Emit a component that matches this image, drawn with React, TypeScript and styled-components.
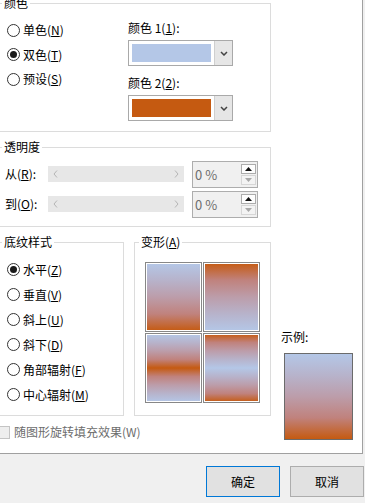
import React from 'react';
import styled, { createGlobalStyle } from 'styled-components';

const BLUE = '#b4c7e7';
const ORANGE = '#c55a11';
// in-between colours, mixed in linear light the way Office blends them
const MID1 = '#b7b3cb';
const MID2 = '#bc9daa';
const MID3 = '#c0827d';

type Shade = 'down' | 'up' | 'center' | 'edge';

const gradients: Record<Shade, string> = {
  down: `linear-gradient(to bottom, ${BLUE} 0%, ${MID1} 25%, ${MID2} 50%, ${MID3} 75%, ${ORANGE} 100%)`,
  up: `linear-gradient(to bottom, ${ORANGE} 0%, ${MID3} 25%, ${MID2} 50%, ${MID1} 75%, ${BLUE} 100%)`,
  center: `linear-gradient(to bottom, ${BLUE} 0%, ${MID1} 12.5%, ${MID2} 25%, ${MID3} 37.5%, ${ORANGE} 50%, ${MID3} 62.5%, ${MID2} 75%, ${MID1} 87.5%, ${BLUE} 100%)`,
  edge: `linear-gradient(to bottom, ${ORANGE} 0%, ${MID3} 12.5%, ${MID2} 25%, ${MID1} 37.5%, ${BLUE} 50%, ${MID1} 62.5%, ${MID2} 75%, ${MID3} 87.5%, ${ORANGE} 100%)`,
};

const GlobalStyle = createGlobalStyle`
  html, body {
    margin: 0;
    padding: 0;
    background: #f0f0f0;
  }
  body {
    font-family: 'Noto Sans CJK SC', 'Noto Sans', sans-serif;
    font-size: 12px;
    line-height: 16px;
    color: #000;
  }
`;

const Page = styled.div`
  width: 365px;
  height: 503px;
  overflow: hidden;
  display: flex;
  flex-direction: column;
  background: #f0f0f0;
`;

const Panel = styled.div`
  box-sizing: border-box;
  width: 363px;
  height: 454px;
  flex-shrink: 0;
  padding-top: 3px;
  background: #fff;
  border-right: 1px solid #a0a0a0;
  border-bottom: 1px solid #a0a0a0;
  overflow: hidden;
  display: flex;
  flex-direction: column;
`;

const Group = styled.div<{ $w: number; $h: number }>`
  position: relative;
  box-sizing: border-box;
  width: ${(p) => p.$w}px;
  height: ${(p) => p.$h}px;
  flex-shrink: 0;
  border: 1px solid #dcdcdc;
`;

const Legend = styled.span`
  position: absolute;
  top: -9px;
  left: 4px;
  padding: 0 2px;
  background: #fff;
  white-space: nowrap;
`;

const ColorGroup = styled(Group)`
  margin-left: -3px;
  display: flex;
`;

const RadioList = styled.div<{ $w?: number; $top: number }>`
  display: flex;
  flex-direction: column;
  width: ${(p) => (p.$w ? `${p.$w}px` : 'auto')};
  padding: ${(p) => p.$top}px 0 0 9px;
`;

const RadioRow = styled.div<{ $h: number }>`
  height: ${(p) => p.$h}px;
  display: flex;
  align-items: center;
  gap: 3px;
  white-space: nowrap;
`;

const RadioCircle = styled.span<{ $on: boolean }>`
  box-sizing: border-box;
  width: 13px;
  height: 13px;
  flex-shrink: 0;
  border-radius: 50%;
  border: 1px solid #333;
  background: #fff;
  display: flex;
  align-items: center;
  justify-content: center;

  &::after {
    content: '';
    display: ${(p) => (p.$on ? 'block' : 'none')};
    width: 7px;
    height: 7px;
    border-radius: 50%;
    background: #1a1a1a;
  }
`;

const Key = styled.span`
  text-decoration: underline;
`;

const ColorColumn = styled.div`
  display: flex;
  flex-direction: column;
  padding-top: 16px;
`;

const FieldLabel = styled.div<{ $gap?: number }>`
  margin-top: ${(p) => p.$gap ?? 0}px;
  white-space: nowrap;
`;

const Dropdown = styled.div`
  box-sizing: border-box;
  display: flex;
  width: 105px;
  height: 26px;
  margin-top: 4px;
  border: 1px solid #a9a9a9;
  background: #fff;
`;

const Swatch = styled.div<{ $color: string }>`
  width: 80px;
  margin: 3px;
  background: ${(p) => p.$color};
`;

const DropButton = styled.div`
  margin-left: auto;
  width: 17px;
  border-left: 1px solid #cfcfcf;
  background: #e6e6e6;
  display: flex;
  align-items: center;
  justify-content: center;
`;

const TransGroup = styled(Group)`
  margin: 15px 0 0 -3px;
  padding: 13px 0 0 7px;
  display: flex;
  flex-direction: column;
  gap: 4px;
`;

const TransRow = styled.div`
  height: 26px;
  display: flex;
  align-items: center;
`;

const TransLabel = styled.span`
  width: 43px;
  white-space: nowrap;
`;

const Slider = styled.div`
  box-sizing: border-box;
  width: 136px;
  height: 16px;
  margin-right: 8px;
  padding: 0 5px;
  background: #e7e7e7;
  display: flex;
  align-items: center;
  justify-content: space-between;
`;

const Spinner = styled.div`
  box-sizing: border-box;
  display: flex;
  width: 66px;
  height: 27px;
  border: 1px solid #adadad;
  background: #f0f0f0;
`;

const SpinText = styled.span`
  flex: 1;
  padding-left: 2px;
  font-size: 13px;
  line-height: 25px;
  color: #6d6d6d;
`;

const SpinButtons = styled.div`
  display: flex;
  flex-direction: column;
  gap: 1px;
  width: 15px;
  padding: 2px 1px 2px 0;
`;

const SpinButton = styled.div<{ $disabled?: boolean }>`
  flex: 1;
  box-sizing: border-box;
  border: 1px solid ${(p) => (p.$disabled ? '#d6d6d6' : '#acacac')};
  background: ${(p) => (p.$disabled ? '#f3f3f3' : '#fdfdfd')};
  display: flex;
  align-items: center;
  justify-content: center;
`;

const BottomRow = styled.div`
  display: flex;
  margin-top: 15px;
`;

const LeftColumn = styled.div`
  display: flex;
  flex-direction: column;
  margin-left: -3px;
`;

const GroupsRow = styled.div`
  display: flex;
  gap: 10px;
`;

const TileGrid = styled.div`
  display: grid;
  grid-template-columns: 57px 57px;
  grid-auto-rows: 70px;
  gap: 1px;
  padding: 19px 0 0 10px;
`;

const Tile = styled.div<{ $shade: Shade }>`
  box-sizing: border-box;
  border: 1px solid #878787;
  background: ${(p) => gradients[p.$shade]};
  box-shadow: inset 0 0 0 1px #fff;
`;

const CheckRow = styled.div`
  height: 16px;
  margin-top: 8px;
  display: flex;
  align-items: center;
  gap: 4px;
  color: #6d6d6d;
  white-space: nowrap;
`;

const CheckBox = styled.span`
  box-sizing: border-box;
  width: 13px;
  height: 13px;
  border: 1px solid #c4c4c4;
  background: #eeeeee;
`;

const SampleColumn = styled.div`
  display: flex;
  flex-direction: column;
  margin-left: 10px;
  padding-top: 87px;
`;

const SampleBox = styled.div`
  box-sizing: border-box;
  width: 69px;
  height: 87px;
  margin: 8px 0 0 3px;
  border: 1px solid #6b6b6b;
  background: ${gradients.down};
`;

const Footer = styled.div`
  flex: 1;
  display: flex;
  justify-content: flex-end;
  align-items: flex-start;
  gap: 10px;
  padding: 12px 1px 0 0;
`;

const Button = styled.button<{ $default?: boolean }>`
  box-sizing: border-box;
  width: 74px;
  height: 31px;
  padding: 0;
  border: 1px solid ${(p) => (p.$default ? '#0078d7' : '#adadad')};
  background: #e1e1e1;
  font: inherit;
  color: #000;
`;

const Chevron = () => (
  <svg width="8" height="5" viewBox="0 0 8 5">
    <polyline points="1,1 4,4 7,1" fill="none" stroke="#444" strokeWidth="1.5" />
  </svg>
);

const Arrow = ({ dir }: { dir: 'left' | 'right' }) => (
  <svg width="5" height="8" viewBox="0 0 5 8">
    <polyline
      points={dir === 'left' ? '4,0.5 1,4 4,7.5' : '1,0.5 4,4 1,7.5'}
      fill="none"
      stroke="#b4b4b4"
      strokeWidth="1"
    />
  </svg>
);

const Triangle = ({ up, color }: { up?: boolean; color: string }) => (
  <svg width="7" height="4" viewBox="0 0 7 4">
    <polygon points={up ? '0,4 3.5,0 7,4' : '0,0 3.5,4 7,0'} fill={color} />
  </svg>
);

const Radio = ({ on, h, children }: { on?: boolean; h: number; children: React.ReactNode }) => (
  <RadioRow $h={h}>
    <RadioCircle $on={!!on} />
    <span>{children}</span>
  </RadioRow>
);

const TransparencyRow = ({ label }: { label: React.ReactNode }) => (
  <TransRow>
    <TransLabel>{label}</TransLabel>
    <Slider>
      <Arrow dir="left" />
      <Arrow dir="right" />
    </Slider>
    <Spinner>
      <SpinText>0 %</SpinText>
      <SpinButtons>
        <SpinButton>
          <Triangle up color="#111" />
        </SpinButton>
        <SpinButton $disabled>
          <Triangle color="#a8a8a8" />
        </SpinButton>
      </SpinButtons>
    </Spinner>
  </TransRow>
);

const ColorPick = ({ color }: { color: string }) => (
  <Dropdown>
    <Swatch $color={color} />
    <DropButton>
      <Chevron />
    </DropButton>
  </Dropdown>
);

export default function App() {
  return (
    <>
      <GlobalStyle />
      <Page>
        <Panel>
          <ColorGroup $w={274} $h={129}>
            <Legend>颜色</Legend>
            <RadioList $w={121} $top={14}>
              <Radio h={24.5}>
                单色(<Key>N</Key>)
              </Radio>
              <Radio h={24.5} on>
                双色(<Key>T</Key>)
              </Radio>
              <Radio h={24.5}>
                预设(<Key>S</Key>)
              </Radio>
            </RadioList>
            <ColorColumn>
              <FieldLabel>
                颜色 1(<Key>1</Key>):
              </FieldLabel>
              <ColorPick color={BLUE} />
              <FieldLabel $gap={9}>
                颜色 2(<Key>2</Key>):
              </FieldLabel>
              <ColorPick color={ORANGE} />
            </ColorColumn>
          </ColorGroup>

          <TransGroup $w={274} $h={80}>
            <Legend>透明度</Legend>
            <TransparencyRow
              label={
                <>
                  从(<Key>R</Key>):
                </>
              }
            />
            <TransparencyRow
              label={
                <>
                  到(<Key>O</Key>):
                </>
              }
            />
          </TransGroup>

          <BottomRow>
            <LeftColumn>
              <GroupsRow>
                <Group $w={127} $h={174}>
                  <Legend>底纹样式</Legend>
                  <RadioList $top={14}>
                    <Radio h={25} on>
                      水平(<Key>Z</Key>)
                    </Radio>
                    <Radio h={25}>
                      垂直(<Key>V</Key>)
                    </Radio>
                    <Radio h={25}>
                      斜上(<Key>U</Key>)
                    </Radio>
                    <Radio h={25}>
                      斜下(<Key>D</Key>)
                    </Radio>
                    <Radio h={25}>
                      角部辐射(<Key>F</Key>)
                    </Radio>
                    <Radio h={25}>
                      中心辐射(<Key>M</Key>)
                    </Radio>
                  </RadioList>
                </Group>
                <Group $w={137} $h={174}>
                  <Legend>
                    变形(<Key>A</Key>)
                  </Legend>
                  <TileGrid>
                    <Tile $shade="down" />
                    <Tile $shade="up" />
                    <Tile $shade="center" />
                    <Tile $shade="edge" />
                  </TileGrid>
                </Group>
              </GroupsRow>
              <CheckRow>
                <CheckBox />
                <span>随图形旋转填充效果(W)</span>
              </CheckRow>
            </LeftColumn>
            <SampleColumn>
              <FieldLabel>示例:</FieldLabel>
              <SampleBox />
            </SampleColumn>
          </BottomRow>
        </Panel>
        <Footer>
          <Button $default>确定</Button>
          <Button>取消</Button>
        </Footer>
      </Page>
    </>
  );
}
